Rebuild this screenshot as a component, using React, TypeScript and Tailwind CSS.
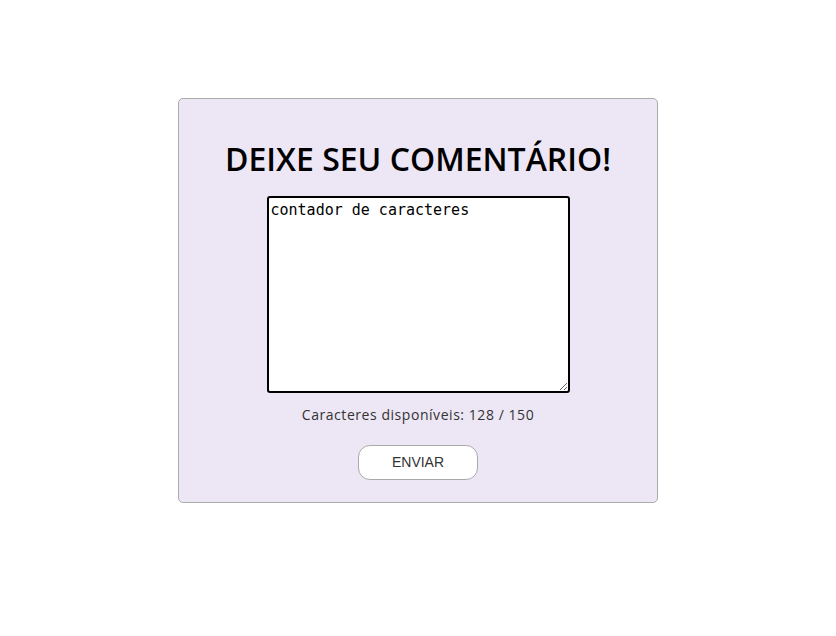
export default function App() {
  const max = 150;
  const text = 'contador de caracteres';
  return (
    <div className="flex min-h-[636px] w-full justify-center bg-white pt-[98px]">
      <div className="flex h-[405px] w-[480px] flex-col items-center rounded-[5px] border border-[#ababab] bg-[#ede6f5]">
        <h1 className="mt-[40px] font-['Open_Sans',sans-serif] text-[32px] font-semibold leading-[40px] text-black">
          DEIXE SEU COMENTÁRIO!
        </h1>
        <textarea
          className="mt-[17px] h-[197px] w-[303px] rounded-[3px] border-2 border-black bg-white px-[2px] pt-[3px] font-['DejaVu_Sans_Mono',monospace] text-[15px] leading-[18px] text-black outline-none"
          defaultValue={text}
        />
        <p className="mt-[12px] font-['Open_Sans',sans-serif] text-[14px] leading-[20px] tracking-[0.55px] text-[#333]">
          Caracteres disponíveis: {max - text.length} / {max}
        </p>
        <button className="mt-[20px] h-[35px] w-[120px] rounded-[12px] border border-[#aaa] bg-white font-['Liberation_Sans',sans-serif] text-[14px] text-[#333]">
          ENVIAR
        </button>
      </div>
    </div>
  );
}
